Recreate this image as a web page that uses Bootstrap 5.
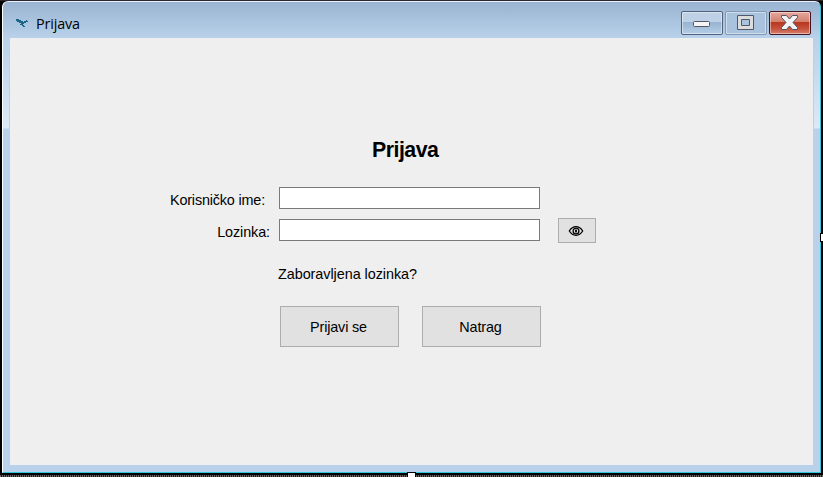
<!DOCTYPE html>
<html lang="hr">
<head>
<meta charset="utf-8">
<title>Prijava</title>
<meta name="viewport" content="width=device-width, initial-scale=1">
<link href="https://cdn.jsdelivr.net/npm/bootstrap@5.3.0/dist/css/bootstrap.min.css" rel="stylesheet">
<style>
html,body{height:100%}
body{background:#000;font-family:"Liberation Sans",Arial,sans-serif;font-size:14.4px;line-height:20px;color:#000;padding:1px 2px 4px;border-top:1px solid #2b2530}
.desktop-edge{left:0;right:0;bottom:0;height:2px;background:repeating-linear-gradient(90deg,#6b6565 0 1px,#1c1a1c 1px 2px)}
.win{width:819px;height:472px;margin-top:-1px;padding:0 7px 7px 7px;border:1px solid #35c4dc;border-left-color:#fff;border-top-color:#eaf1f8;border-radius:6px 6px 0 0;background:linear-gradient(180deg,#99b4d1 0,#b9d1ea 36px,#b9d1ea 38px,#dce9f6 126px,#b9d1ea 127px)}
.titlebar{height:36px}
.caption{font-family:"Open Sans","Noto Sans",sans-serif;font-size:14.4px;letter-spacing:-.15px;margin-left:7px}
.caption-btns{gap:2px;padding:9px 2px 0 0}
.caption-btn{width:42px;height:24px;border:1px solid #50617c;border-radius:2px;box-shadow:inset 0 0 0 1px #ffffff70;background:linear-gradient(#bdd0e5 0 44%,#98b3d0 46%,#b5cde7)}
.caption-btn.max{border-color:#8299b5;background:#a9c3df}
.caption-btn.close-x{border-color:#431422;background:linear-gradient(#e6a99e,#d3806f 44%,#b8371f 46%,#c4503a 75%,#d9806d)}
.client{width:803px;height:427px;background:#efefef;padding-top:98px;box-shadow:0 0 0 1px #b9d1ea}
.client h1{font-size:21.3px;font-weight:700;line-height:28px;margin:0 0 23px 362px;letter-spacing:-.5px}
.field-row{height:32px}
.lbl{padding-top:3px}
.lbl.user{width:255px;margin-right:14px;letter-spacing:-.17px}
.lbl.pass{width:260px;margin-right:9px;letter-spacing:-.1px}
.txt{width:261px;height:22px;border:1px solid #7a7a7a;background:#fff;border-radius:0}
.push{border:1px solid #adadad;background:#e1e1e1;border-radius:0;color:#000}
.eye{width:38px;height:25px;margin-left:18px;margin-top:-1px}
.eye svg{margin-left:9px}
.forgot{margin:13px 0 22px 268px;letter-spacing:-.05px}
.actions{margin-left:270px;gap:23px}
.actions .push{width:119px;height:41px;font-size:14.4px;letter-spacing:-.15px;padding:0 8px 0 6px}
.handle{background:#fff;border:1px solid #000}
.h-right{width:5px;height:9px;right:-2px;top:232px}
.h-bottom{width:9px;height:6px;left:407px;bottom:-1px}
</style>
<script src="https://cdn.jsdelivr.net/npm/bootstrap@5.3.0/dist/js/bootstrap.bundle.min.js"></script>
</head>
<body class="position-relative overflow-hidden">
<div class="win">
  <header class="titlebar d-flex">
    <div class="d-flex align-items-start flex-grow-1">
      <svg width="15" height="10" viewBox="0 0 15 10" class="mt-3 ms-1" fill="#1b6588"><path d="M2 1h3v1h2v1h2v1h1V3h2V2h1v1h1v1h-2v1h-2v1h-1v1h1v1h1v1H9V8H8V7H6V6h1V5H5V4H3V3H2z"/></svg>
      <span class="caption pt-2 mt-1">Prijava</span>
    </div>
    <div class="caption-btns d-flex">
      <span class="caption-btn"><svg class="d-block" width="40" height="22" viewBox="0 0 40 22"><rect x="11.500" y="9.500" width="16" height="5" rx="1" fill="#f4f4f4" stroke="#535666"/></svg></span>
      <span class="caption-btn max"><svg class="d-block" width="40" height="22" viewBox="0 0 40 22"><path fill-rule="evenodd" d="M11.500 3.500h16v14h-16zM15.500 7.500h8v6h-8z" fill="#dcdcdc" stroke="#535666"/></svg></span>
      <span class="caption-btn close-x"><svg class="d-block" width="40" height="22" viewBox="0 0 40 22"><path d="M11.500 3.500h5l3 3.500 3-3.500h5v2L23 10.500l4.500 5v2h-5l-3-3.500-3 3.500h-5v-2l4.500-5-4.500-5z" fill="#f3f3f3" stroke="#535666"/></svg></span>
    </div>
  </header>
  <main class="client">
    <h1>Prijava</h1>
    <div class="field-row d-flex align-items-start">
      <label class="lbl user text-end" for="u">Korisničko ime:</label><input id="u" class="txt" type="text">
    </div>
    <div class="field-row d-flex align-items-start">
      <label class="lbl pass text-end" for="p">Lozinka:</label><input id="p" class="txt" type="password">
      <button class="push eye p-0 d-flex align-items-center" type="button" aria-label="Lozinka"><svg width="16" height="12" viewBox="0 0 16 12" fill="none" stroke="#000"><path d="M1.300 6Q4 1.700 8 1.700T14.700 6Q12 10.300 8 10.300T1.300 6z" stroke-width="1.300"/><circle cx="8" cy="6" r="2.900" stroke-width="1.300"/><ellipse cx="8" cy="6" rx="1" ry="1.800" fill="#000" stroke="none"/></svg></button>
    </div>
    <div class="forgot">Zaboravljena lozinka?</div>
    <div class="actions d-flex">
      <button class="push" type="button">Prijavi se</button>
      <button class="push" type="button">Natrag</button>
    </div>
  </main>
</div>
<div class="desktop-edge position-absolute"></div>
<div class="handle h-right position-absolute"></div>
<div class="handle h-bottom position-absolute"></div>
</body>
</html>
